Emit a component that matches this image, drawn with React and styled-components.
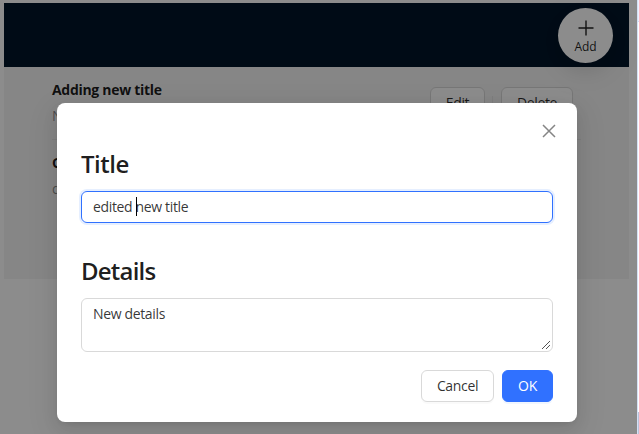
import React from "react";
import styled, { createGlobalStyle } from "styled-components";

const Global = createGlobalStyle`
  * { box-sizing: border-box; }
  body { margin: 0; background: #fff; overflow: hidden; font: 14px/22px "Open Sans", "Noto Sans", sans-serif; color: rgba(0,0,0,.88); }
  h2, h4, p { margin: 0; }
  button { font: inherit; color: inherit; padding: 0; margin: 0; }
`;

const Window = styled.div`
  display: flex;
  width: 639px;
  height: 434px;
  overflow: hidden;
`;
const Page = styled.div`
  position: relative;
  width: 637px;
  height: 434px;
  padding: 3px 8px 0 4px;
  background: #fff;
  overflow: hidden;
`;
const Edge = styled.div`
  width: 2px;
  border-left: 1px solid #d5e0f5;
  background: linear-gradient(#eef3ff 21px, #d3def5 21px, #d3def5 22px, #fff 22px, #fff 412px, #b9c3da 412px);
`;
const Header = styled.header`
  display: flex;
  justify-content: flex-end;
  height: 64px;
  padding: 5px 16px 0 0;
  background: #001529;
`;
const AddButton = styled.button`
  position: relative;
  display: flex;
  flex-direction: column;
  align-items: center;
  width: 55px;
  height: 55px;
  padding-top: 12px;
  border: 0;
  border-radius: 50%;
  background: #fff;
  font-size: 12px;
  line-height: 17px;
  letter-spacing: -0.15px;
  box-shadow: 0 6px 16px rgba(0,0,0,.08), 0 9px 28px 8px rgba(0,0,0,.05);
  svg { display: block; margin-bottom: 2px; }
`;
const Content = styled.main`
  height: 212px;
  padding: 0 48px;
  background: #f5f5f5;
`;
const Item = styled.div`
  display: flex;
  justify-content: space-between;
  height: 73px;
  padding-top: 12px;
  border-bottom: 1px solid ${p => (p.$last ? "transparent" : "rgba(5,5,5,.06)")};
`;
const ItemTitle = styled.h4`
  font-size: 14px;
  line-height: 22px;
  font-weight: 700;
  letter-spacing: -0.3px;
`;
const ItemText = styled.p`
  margin-top: 4px;
  color: rgba(0,0,0,.45);
`;
const Actions = styled.div`
  display: flex;
  align-items: center;
  height: 32px;
  margin: 8px 8px 0 0;
`;
const Divider = styled.span`
  width: 1px;
  height: 14px;
  margin: 0 8px 0 7px;
  background: rgba(5,5,5,.06);
`;
const Button = styled.button`
  width: ${p => p.$width}px;
  height: 32px;
  border: 1px solid ${p => (p.$primary ? "#3071ff" : "#d9d9d9")};
  border-radius: 6px;
  background: ${p => (p.$primary ? "#3071ff" : "#fff")};
  color: ${p => (p.$primary ? "#fff" : "rgba(0,0,0,.82)")};
  letter-spacing: ${p => p.$spacing || "-0.35px"};
  box-shadow: 0 2px 0 ${p => (p.$primary ? "rgba(5,95,255,.06)" : "rgba(0,0,0,.02)")};
`;
const Mask = styled.div`
  position: absolute;
  inset: 0;
  padding: 103px 60px 0 57px;
  background: rgba(0,0,0,.45);
`;
const Dialog = styled.section`
  position: relative;
  display: flex;
  flex-direction: column;
  height: 319px;
  padding: 45px 24px 20px;
  border-radius: 8px;
  background: #fff;
  box-shadow: 0 6px 16px rgba(0,0,0,.08), 0 3px 6px -4px rgba(0,0,0,.12), 0 9px 28px 8px rgba(0,0,0,.05);
`;
const Close = styled.button`
  position: absolute;
  top: 17px;
  right: 17px;
  display: grid;
  place-items: center;
  width: 22px;
  height: 22px;
  border: 0;
  background: none;
`;
const Heading = styled.h2`
  height: 32px;
  font-size: 24px;
  line-height: 32px;
  font-weight: 570;
  letter-spacing: ${p => p.$spacing};
`;
const Field = styled.div`
  position: relative;
  height: ${p => p.$height}px;
  margin: 11px 0 ${p => p.$gap}px;
  padding: 4px 11px;
  border: 1px solid ${p => (p.$focused ? "#3071ff" : "#d9d9d9")};
  border-radius: 6px;
  box-shadow: ${p => (p.$focused ? "0 0 0 2px rgba(5,95,255,.1)" : "none")};
  color: rgba(0,0,0,.8);
  letter-spacing: ${p => p.$spacing};
`;
const Caret = styled.span`
  position: absolute;
  left: 54px;
  top: 5px;
  width: 1px;
  height: 19px;
  background: #000;
`;
const Grip = styled.svg`
  position: absolute;
  right: 1px;
  bottom: 1px;
`;
const Footer = styled.footer`
  display: flex;
  justify-content: flex-end;
  gap: 8px;
`;

export default function App() {
  return (
    <Window>
      <Global />
      <Page>
        <Header>
          <AddButton>
            <svg width="16" height="16" viewBox="0 0 16 16" stroke="#222" strokeWidth="1.4"><path d="M8 .5v15M.5 8h15" /></svg>
            Add
          </AddButton>
        </Header>
        <Content>
          <Item>
            <div>
              <ItemTitle>Adding new title</ItemTitle>
              <ItemText>N</ItemText>
            </div>
            <Actions>
              <Button $width={55}>Edit</Button>
              <Divider />
              <Button $width={72}>Delete</Button>
            </Actions>
          </Item>
          <Item $last>
            <div>
              <ItemTitle>O</ItemTitle>
              <ItemText>d</ItemText>
            </div>
          </Item>
        </Content>
        <Mask>
          <Dialog role="dialog">
            <Close aria-label="Close">
              <svg width="14" height="14" viewBox="0 0 14 14" stroke="#858585" strokeWidth="1.5"><path d="M1 1l12 12M13 1L1 13" /></svg>
            </Close>
            <Heading $spacing="-0.5px">Title</Heading>
            <Field $focused $height={32} $gap={32} $spacing="-0.35px">edited new title<Caret /></Field>
            <Heading $spacing="-0.8px">Details</Heading>
            <Field $height={54} $gap={18} $spacing="-0.35px">
              New details
              <Grip width="10" height="10" viewBox="0 0 10 10" stroke="#555" strokeWidth="1"><path d="M1 9L9 1M5 9l4-4" /></Grip>
            </Field>
            <Footer>
              <Button $width={73}>Cancel</Button>
              <Button $width={51} $primary $spacing="-0.2px">OK</Button>
            </Footer>
          </Dialog>
        </Mask>
      </Page>
      <Edge />
    </Window>
  );
}
